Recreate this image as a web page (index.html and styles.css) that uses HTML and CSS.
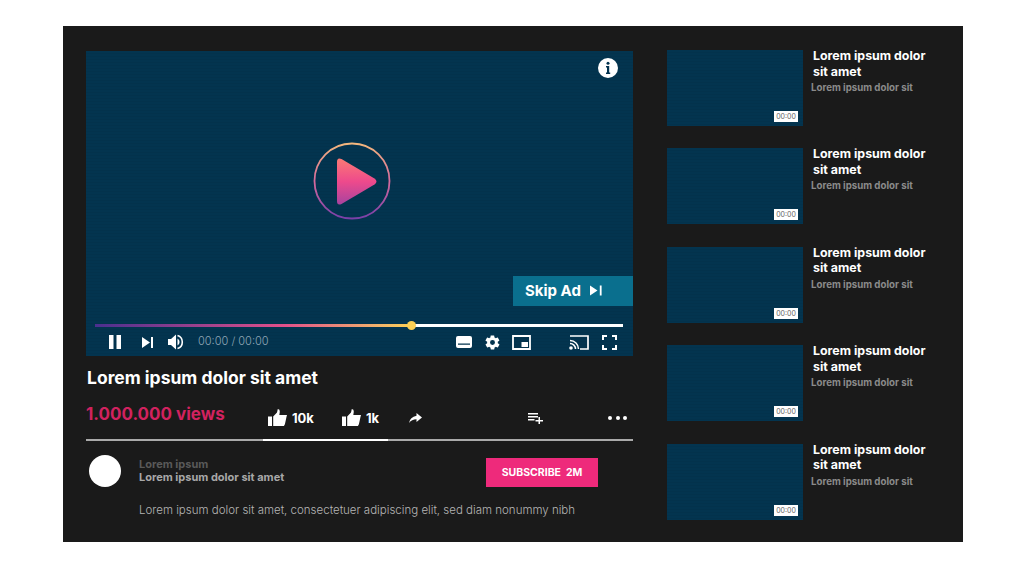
FILE: index.html
```html
<!DOCTYPE html>
<html>

<head>
    <link rel="stylesheet" href="styles.css">
</head>

<body>
    <svg class="defs" width="0" height="0">
        <defs>
            <linearGradient id="ring" x1="0" y1="0" x2="0" y2="1">
                <stop offset="0" stop-color="#f4b77d" />
                <stop offset="0.5" stop-color="#d66a9c" />
                <stop offset="1" stop-color="#7a3fa8" />
            </linearGradient>
            <linearGradient id="tri" x1="0" y1="0" x2="0" y2="1">
                <stop offset="0" stop-color="#fb7a74" />
                <stop offset="0.5" stop-color="#ee4a8c" />
                <stop offset="1" stop-color="#a8439f" />
            </linearGradient>
        </defs>
    </svg>

    <div class="frame">
        <div class="main">
            <div class="video">
                <svg class="info" width="20" height="20" viewBox="0 0 20 20">
                    <circle cx="10" cy="10" r="10" fill="#fff" />
                    <circle cx="10" cy="5.200" r="1.500" fill="#02324f" />
                    <path d="M8 8h3.200v6.600h1v1.500H8v-1.500h1v-5H8z" fill="#02324f" />
                </svg>
                <svg class="play" width="78" height="78" viewBox="0 0 78 78">
                    <circle cx="39" cy="39" r="37.500" fill="none" stroke="url(#ring)" stroke-width="1.800" />
                    <path d="M24 20q0-5 4.500-3l33 19.500q4 3 0 6l-33 19.500q-4.500 2-4.500-3z" fill="url(#tri)" />
                </svg>
                <div class="skip">
                    <span>Skip Ad</span>
                    <svg width="12" height="11" viewBox="0 0 12 11">
                        <path d="M0 .5l7.500 5-7.500 5z M9.800 .5h1.800v10H9.800z" fill="#fff" />
                    </svg>
                </div>
                <div class="progress">
                    <div class="progress-done"></div>
                    <div class="progress-knob"></div>
                </div>
                <div class="controls">
                    <div class="controls-left">
                        <svg width="12" height="14" viewBox="0 0 12 14">
                            <path d="M0 0h4.500v14H0z M7.500 0H12v14H7.500z" fill="#fff" />
                        </svg>
                        <svg class="next" width="11" height="11" viewBox="0 0 11 11">
                            <path d="M0 0l8 5.500-8 5.500z M9 0h2v11H9z" fill="#fff" />
                        </svg>
                        <svg class="volume" width="16" height="16" viewBox="0 0 16 16">
                            <path d="M0 5h3L8 .5v15L3 11H0z" fill="#fff" />
                            <path d="M9.500 4.500a4 4 0 0 1 0 7z" fill="#fff" />
                            <path d="M9.500 1.500a6.800 6.800 0 0 1 0 13" fill="none" stroke="#fff" stroke-width="1.600" />
                        </svg>
                        <span class="time">00:00 / 00:00</span>
                    </div>
                    <div class="controls-right">
                        <svg class="cc" width="16" height="12" viewBox="0 0 16 12">
                            <path fill-rule="evenodd" d="M2 0h12a2 2 0 0 1 2 2v8a2 2 0 0 1-2 2H2a2 2 0 0 1-2-2V2a2 2 0 0 1 2-2z M2 7.500v1.300h12V7.500z" fill="#fff" />
                        </svg>
                        <svg class="gear" width="17" height="17" viewBox="0 0 24 24">
                            <path d="M19.400 13c.1-.3.1-.7.1-1s0-.7-.1-1l2.100-1.600c.2-.2.2-.4.1-.6l-2-3.500c-.1-.2-.4-.3-.6-.2l-2.500 1c-.5-.4-1.100-.7-1.700-1l-.4-2.600c0-.3-.2-.5-.5-.5h-4c-.3 0-.5.2-.5.400l-.4 2.700c-.6.2-1.200.6-1.700 1l-2.500-1c-.2-.1-.5 0-.6.2l-2 3.500c-.1.200-.1.500.1.600L4.500 11c0 .3-.1.700-.1 1s0 .7.1 1l-2.100 1.600c-.2.200-.2.400-.1.600l2 3.500c.1.200.4.300.6.200l2.500-1c.5.400 1.100.7 1.700 1l.4 2.600c0 .3.200.5.500.5h4c.3 0 .5-.2.500-.4l.4-2.700c.6-.2 1.200-.6 1.700-1l2.500 1c.2.100.5 0 .6-.2l2-3.500c.1-.2.1-.5-.1-.6zM12 15.500a3.500 3.500 0 1 1 0-7 3.500 3.500 0 0 1 0 7z" fill="#fff" />
                        </svg>
                        <svg class="mini" width="19" height="15" viewBox="0 0 19 15">
                            <path d="M1 1h17v13H1z" fill="none" stroke="#fff" stroke-width="1.800" />
                            <path d="M9.500 7H16v5H9.500z" fill="#fff" />
                        </svg>
                        <svg class="cast" width="20" height="15" viewBox="0 0 20 15">
                            <path d="M1 1h18v13h-8" fill="none" stroke="#fff" stroke-width="1.700" />
                            <path d="M1 5.500a8.500 8.500 0 0 1 8.500 8.500 M1 8.500a5.500 5.500 0 0 1 5.500 5.500" fill="none" stroke="#fff" stroke-width="1.500" />
                            <circle cx="2" cy="13" r="1.800" fill="#fff" />
                        </svg>
                        <svg class="full" width="15" height="15" viewBox="0 0 15 15">
                            <path d="M1 5V1h4 M10 1h4v4 M14 10v4h-4 M5 14H1v-4" fill="none" stroke="#fff" stroke-width="2" />
                        </svg>
                    </div>
                </div>
            </div>

            <h1 class="title">Lorem ipsum dolor sit amet</h1>

            <div class="stats">
                <div class="views">1.000.000 views</div>
                <div class="rating">
                    <div class="rate">
                        <svg width="19" height="17" viewBox="0 0 19 17">
                            <path d="M0 7.500h4V17H0z M5.200 7.500 9 3.500 9.800 0q2.200.2 2 2.700L11.300 6H19l-.6 2.300-.4 2-.5 2.300-.6 2.700-1 1.700H5.200z" fill="#fff" />
                        </svg>
                        <span>10k</span>
                    </div>
                    <div class="rate">
                        <svg width="19" height="17" viewBox="0 0 19 17">
                            <path d="M0 7.500h4V17H0z M5.200 7.500 9 3.500 9.800 0q2.200.2 2 2.700L11.300 6H19l-.6 2.300-.4 2-.5 2.300-.6 2.700-1 1.700H5.200z" fill="#fff" />
                        </svg>
                        <span>1k</span>
                    </div>
                </div>
                <div class="tools">
                    <svg width="13" height="10" viewBox="0 0 13 10">
                        <path d="M7.500 0 13 4.500 7.500 9V6.300Q3 6.200 0 10 1 4 7.500 2.800z" fill="#fff" />
                    </svg>
                    <svg class="queue" width="15" height="11" viewBox="0 0 15 11">
                        <path d="M0 0h10v1.500H0z M0 3h10v1.500H0z M0 6h6.500v1.500H0z M10.500 4h1.500v3h3v1.500h-3V11h-1.500V8.500h-3V7h3z" fill="#fff" />
                    </svg>
                    <div class="dots"><i></i><i></i><i></i></div>
                </div>
            </div>

            <div class="author">
                <div class="avatar"></div>
                <div class="names">
                    <div class="channel">Lorem ipsum</div>
                    <div class="channel-sub">Lorem ipsum dolor sit amet</div>
                </div>
                <div class="subscribe">SUBSCRIBE&nbsp; 2M</div>
            </div>
            <p class="desc">Lorem ipsum dolor sit amet, consectetuer adipiscing elit, sed diam nonummy nibh</p>
        </div>

        <div class="side">
            <div class="item">
                <div class="thumb"><span class="stamp">00:00</span></div>
                <div class="item-text">
                    <div class="item-title">Lorem ipsum dolor sit amet</div>
                    <div class="item-sub">Lorem ipsum dolor sit</div>
                </div>
            </div>
            <div class="item">
                <div class="thumb"><span class="stamp">00:00</span></div>
                <div class="item-text">
                    <div class="item-title">Lorem ipsum dolor sit amet</div>
                    <div class="item-sub">Lorem ipsum dolor sit</div>
                </div>
            </div>
            <div class="item">
                <div class="thumb"><span class="stamp">00:00</span></div>
                <div class="item-text">
                    <div class="item-title">Lorem ipsum dolor sit amet</div>
                    <div class="item-sub">Lorem ipsum dolor sit</div>
                </div>
            </div>
            <div class="item">
                <div class="thumb"><span class="stamp">00:00</span></div>
                <div class="item-text">
                    <div class="item-title">Lorem ipsum dolor sit amet</div>
                    <div class="item-sub">Lorem ipsum dolor sit</div>
                </div>
            </div>
            <div class="item">
                <div class="thumb"><span class="stamp">00:00</span></div>
                <div class="item-text">
                    <div class="item-title">Lorem ipsum dolor sit amet</div>
                    <div class="item-sub">Lorem ipsum dolor sit</div>
                </div>
            </div>
        </div>
    </div>
</body>

</html>
```

FILE: styles.css
```css
html,
body {
    margin: 0;
    padding: 0;
    height: 567px;
    overflow: hidden;
    background: #fff;
    font-family: "Inter", "Liberation Sans", sans-serif;
}

.defs {
    position: absolute;
}

.frame {
    display: flex;
    gap: 34px;
    box-sizing: border-box;
    width: 900px;
    height: 516px;
    margin: 26px 0 0 63px;
    padding: 25px 0 0 23px;
    background: #1a1a1a;
}

.main {
    width: 547px;
}

/* video */
.video {
    position: relative;
    height: 305px;
    background: repeating-linear-gradient(#03344f 0 2px, #03324c 2px 3px);
}

.info {
    position: absolute;
    top: 7px;
    right: 15px;
}

.play {
    position: absolute;
    top: 91px;
    left: 227px;
}

.skip {
    position: absolute;
    right: 0;
    top: 225px;
    display: flex;
    align-items: center;
    gap: 9px;
    box-sizing: border-box;
    width: 120px;
    height: 30px;
    padding: 0 0 2px 12px;
    background: #0a6f8e;
    color: #fff;
    font-size: 15px;
    font-weight: 700;
}

.progress {
    position: absolute;
    top: 273px;
    left: 9px;
    width: 528px;
    height: 3px;
    background: #fff;
}

.progress-done {
    width: 316px;
    height: 3px;
    background: linear-gradient(90deg, #4a2f8f, #e2508a 60%, #f2b36a 90%, #fbcf55);
}

.progress-knob {
    position: absolute;
    top: -3px;
    left: 312px;
    width: 9px;
    height: 9px;
    border-radius: 50%;
    background: #fbcf55;
}

.controls {
    position: absolute;
    left: 23px;
    right: 16px;
    top: 282px;
    display: flex;
    justify-content: space-between;
    align-items: center;
    height: 18px;
}

.controls-left,
.controls-right {
    display: flex;
    align-items: center;
}

.next {
    margin-left: 21px;
}

.volume {
    margin-left: 15px;
}

.time {
    margin-left: 14px;
    margin-bottom: 2px;
    color: #8fa6b5;
    font-size: 11px;
    font-weight: 300;
}

.cc {
    margin-right: 1px;
}

.gear {
    margin-left: 11px;
}

.mini {
    margin-left: 11px;
}

.cast {
    margin-left: 38px;
}

.full {
    margin-left: 13px;
}

/* below the video */
.title {
    margin: 12px 0 0 1px;
    color: #fff;
    font-size: 17.500px;
    font-weight: 700;
    line-height: 20px;
}

.stats {
    display: flex;
    align-items: center;
    height: 50px;
    margin-top: 1px;
    border-bottom: 2px solid #aaa;
}

.views {
    width: 177px;
    color: #d1225f;
    font-size: 17px;
    font-weight: 700;
    white-space: nowrap;
}

.rating {
    display: flex;
    align-self: stretch;
    gap: 28px;
    box-sizing: border-box;
    width: 125px;
    margin-bottom: -2px;
    padding: 7px 0 0 5px;
    border-bottom: 2px solid #fff;
    align-items: center;
    color: #fff;
    font-size: 13px;
    font-weight: 700;
}

.rate {
    display: flex;
    align-items: center;
    gap: 5px;
}

.tools {
    display: flex;
    align-items: center;
    padding-top: 8px;
    margin-left: 21px;
}

.queue {
    margin-left: 106px;
}

.dots {
    display: flex;
    gap: 3.500px;
    margin-left: 65px;
}

.dots i {
    width: 4px;
    height: 4px;
    border-radius: 50%;
    background: #fff;
}

.author {
    display: flex;
    align-items: center;
    height: 32px;
    margin-top: 14px;
    padding-left: 3px;
}

.avatar {
    width: 32px;
    height: 32px;
    border-radius: 50%;
    background: #fff;
}

.names {
    width: 347px;
    margin-left: 18px;
    font-size: 11px;
    font-weight: 700;
    line-height: 13px;
}

.channel {
    color: #595959;
}

.channel-sub {
    color: #a8a8a8;
}

.subscribe {
    display: flex;
    flex: none;
    align-items: center;
    justify-content: center;
    width: 112px;
    height: 29px;
    margin-top: 3px;
    background: #ee2a7b;
    color: #fff;
    font-size: 10.500px;
    font-weight: 700;
}

.desc {
    margin: 15px 0 0 53px;
    color: #b5b5b5;
    font-size: 11.500px;
    font-weight: 300;
    line-height: 16px;
    white-space: nowrap;
}

/* sidebar */
.side {
    display: flex;
    flex-direction: column;
    gap: 22.400px;
    margin-top: -1px;
}

.item {
    display: flex;
    height: 76px;
}

.thumb {
    position: relative;
    flex: none;
    width: 136px;
    height: 76px;
    background: repeating-linear-gradient(#03344f 0 2px, #03324c 2px 3px);
}

.stamp {
    position: absolute;
    right: 5px;
    bottom: 4px;
    width: 24px;
    height: 11px;
    background: #fff;
    color: #666;
    font-size: 7px;
    line-height: 11px;
    text-align: center;
}

.item-text {
    margin-top: -2px;
    margin-left: 8px;
}

.item-title {
    width: 118px;
    margin-left: 2px;
    color: #fff;
    font-size: 12.400px;
    font-weight: 700;
    line-height: 15.500px;
}

.item-sub {
    margin-top: 2px;
    color: #8a8a8a;
    font-size: 9.700px;
    font-weight: 700;
    line-height: 13px;
}
```
